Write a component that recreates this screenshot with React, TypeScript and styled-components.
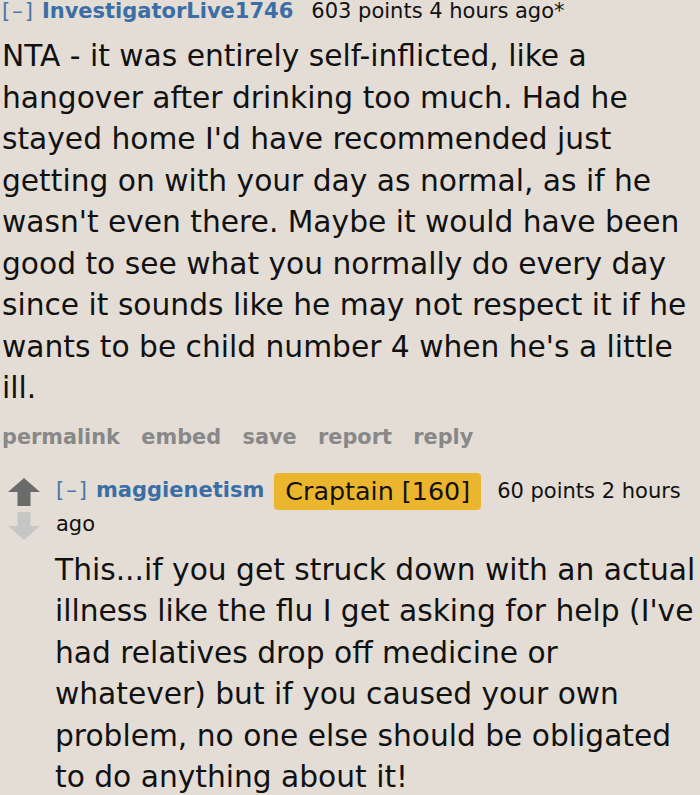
import React from "react";
import styled, { createGlobalStyle } from "styled-components";

const Global = createGlobalStyle`
  html, body { margin: 0; padding: 0; background: #e3ddd6; }
  body { font-family: "DejaVu Sans", Verdana, sans-serif; color: #111; overflow: hidden; }
`;

const Page = styled.div`
  width: 700px;
  height: 795px;
  padding: 0 0 0 2px;
  box-sizing: border-box;
  background: #e3ddd6;
  overflow: hidden;
`;

const Comment = styled.div`
  display: flex;
  flex-direction: column;
`;

const Tagline = styled.div`
  font-size: 21px;
  line-height: 22px;
  white-space: nowrap;
`;

const Toggle = styled.span`
  color: #4a77a8;
  letter-spacing: 2px;
  margin-right: 7px;
`;

const Author = styled.span<{ $gap?: number }>`
  color: #3b6ea5;
  font-weight: bold;
  margin-right: ${(p) => p.$gap ?? 18}px;
`;

const Meta = styled.span`
  color: #111;
  font-size: 21px;
`;

const Body = styled.div`
  font-size: 29.7px;
  line-height: 41.5px;
  color: #111;
  margin-top: 13px;
`;

const Actions = styled.div`
  display: flex;
  gap: 21.5px;
  margin-top: 16px;
  font-size: 20.8px;
  line-height: 24px;
  font-weight: bold;
  color: #888;
`;

const Child = styled.div`
  display: flex;
  margin-top: 24px;
`;

const Votes = styled.div`
  width: 53px;
  box-sizing: border-box;
  flex-shrink: 0;
  display: flex;
  flex-direction: column;
  padding-left: 5px;
  padding-top: 4px;
  gap: 2px;
`;

const Entry = styled.div`
  flex: 1;
  min-width: 0;
  padding-left: 1px;
`;

const Flair = styled.span`
  display: inline-block;
  vertical-align: middle;
  background: #ecb52e;
  color: #111;
  border-radius: 4px;
  padding: 0 11px;
  margin-right: 16px;
  font-size: 25.4px;
  line-height: 37px;
`;

const ChildTagline = styled.div`
  font-size: 21px;
  line-height: 28px;
`;

const ChildBody = styled(Body)`
  margin-top: 11px;
  margin-left: -1px;
`;

const Arrow = ({ color, down }: { color: string; down?: boolean }) => (
  <svg width="34" height="31" viewBox="0 0 34 31" style={{ transform: down ? "scaleY(-1)" : undefined }}>
    <path d="M17 1 L33 15 L23.5 15 L23.5 29 L10.5 29 L10.5 15 L1 15 Z" fill={color} />
  </svg>
);

export default function App() {
  return (
    <Page>
      <Global />
      <Comment>
        <Tagline>
          <Toggle>[–]</Toggle>
          <Author>InvestigatorLive1746</Author>
          <Meta>603 points 4 hours ago*</Meta>
        </Tagline>
        <Body>
          NTA - it was entirely self-inflicted, like a hangover after drinking too much. Had he stayed home I'd have
          recommended just getting on with your day as normal, as if he wasn't even there. Maybe it would have been
          good to see what you normally do every day since it sounds like he may not respect it if he wants to be
          child number 4 when he's a little ill.
        </Body>
        <Actions>
          <span>permalink</span>
          <span>embed</span>
          <span>save</span>
          <span>report</span>
          <span>reply</span>
        </Actions>
        <Child>
          <Votes>
            <Arrow color="#6b6b6b" />
            <Arrow color="#c6c6c6" down />
          </Votes>
          <Entry>
            <ChildTagline>
              <Toggle>[–]</Toggle>
              <Author $gap={10}>maggienetism</Author>
              <Flair>Craptain [160]</Flair>
              <Meta>60 points 2 hours ago</Meta>
            </ChildTagline>
            <ChildBody>
              This...if you get struck down with an actual illness like the flu I get asking for help (I've had
              relatives drop off medicine or whatever) but if you caused your own problem, no one else should be
              obligated to do anything about it!
            </ChildBody>
          </Entry>
        </Child>
      </Comment>
    </Page>
  );
}
